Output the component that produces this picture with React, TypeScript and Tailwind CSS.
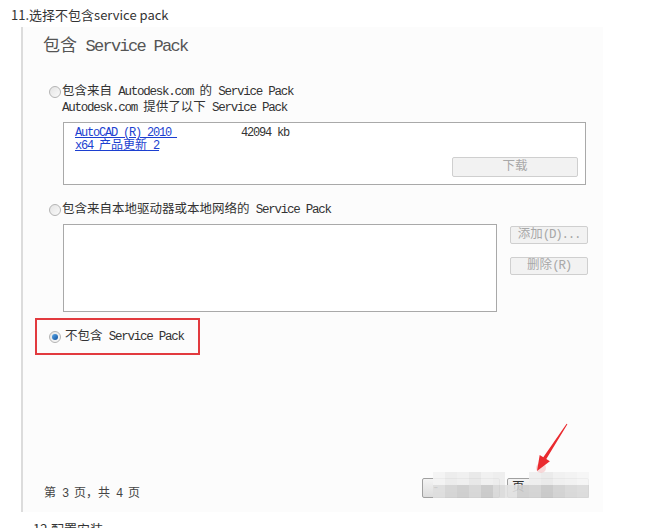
import React from "react";

// split latin runs so the mono font can be squeezed to half-width like SimSun
const Mixed = ({ text }: { text: string }) => (
  <>
    {text.split(/([\x20-\x7e]+)/).map((s, i) =>
      /[\x20-\x7e]/.test(s) ? (
        <span key={i} className="tracking-[-0.1em]">
          {s}
        </span>
      ) : (
        <React.Fragment key={i}>{s}</React.Fragment>
      )
    )}
  </>
);

const Radio = ({ checked = false }: { checked?: boolean }) => (
  <div className="w-[12px] h-[12px] rounded-full border border-[#b4b4b4] bg-gradient-to-br from-[#e4e4e4] to-[#fafafa] flex items-center justify-center shrink-0">
    {checked && (
      <div className="w-[6px] h-[6px] rounded-full bg-gradient-to-br from-[#5aa8e8] to-[#0d4f9c]" />
    )}
  </div>
);

const GrayButton = ({ label, className }: { label: string; className: string }) => (
  <div
    className={`border border-[#cfcfcf] rounded-[2px] bg-[#f2f2f2] text-[#a8a8a8] flex items-center justify-center ${className}`}
  >
    <Mixed text={label} />
  </div>
);

const mosaic = [
  ["#f3f3f3", "#ebebeb", "#eeeeee", "#e7e7e7", "#f0f0f0", "#ececec", "#f6f6f6", "#f1f1f1", "#ededed", "#e9e9e9", "#efefef", "#f2f2f2", "#f5f5f5"],
  ["#dedede", "#d4d4d4", "#cdcdcd", "#d6d6d6", "#c9c9c9", "#d9d9d9", "#e2e2e2", "#cfcfcf", "#d3d3d3", "#c8c8c8", "#d1d1d1", "#d8d8d8", "#dcdcdc"],
];

export default function App() {
  return (
    <div className="relative w-[655px] h-[528px] overflow-hidden bg-white font-['Noto_Sans_CJK_SC',sans-serif]">
      {/* caption */}
      <div className="pl-[11px] pt-[6px] h-[27px] text-[13px] leading-[18px] text-[#333]">
        11.选择不包含service pack
      </div>

      {/* installer screenshot */}
      <div className="ml-[21px] w-[582px] h-[485px] border-l-2 border-[#dcdcdc] bg-[#fcfcfc] flex flex-col text-[12.5px] leading-[16px] text-[#333] font-['Liberation_Mono','Noto_Sans_CJK_SC',monospace]">
        <div className="ml-[20px] mt-[10px] text-[17px] leading-[20px] text-[#555]">
          <Mixed text="包含 Service Pack" />
        </div>

        <div className="ml-[26px] mt-[27px] flex items-center gap-[1px]">
          <Radio />
          <span>
            <Mixed text="包含来自 Autodesk.com 的 Service Pack" />
          </span>
        </div>
        <div className="ml-[39px]">
          <Mixed text="Autodesk.com 提供了以下 Service Pack" />
        </div>

        <div className="ml-[40px] mt-[6px] w-[523px] h-[63px] border border-[#a9a9a9] bg-white flex flex-col pl-[11px] pr-[7px] pt-[4px]">
          <div className="flex text-[12px] leading-[13px]">
            <div className="w-[166px] text-[#1c3fd0] underline">
              <div className="whitespace-pre">
                <Mixed text="AutoCAD (R) 2010 " />
              </div>
              <div>
                <Mixed text="x64 产品更新 2" />
              </div>
            </div>
            <div>
              <Mixed text="42094 kb" />
            </div>
          </div>
          <div className="flex justify-end mt-[4px]">
            <GrayButton label="下载" className="w-[126px] h-[20px]" />
          </div>
        </div>

        <div className="ml-[26px] mt-[17px] flex items-center gap-[1px]">
          <Radio />
          <span>
            <Mixed text="包含来自本地驱动器或本地网络的 Service Pack" />
          </span>
        </div>

        <div className="ml-[40px] mt-[6px] flex">
          <div className="w-[434px] h-[88px] border border-[#a9a9a9] bg-white" />
          <div className="ml-[13px] mt-[2px] flex flex-col gap-[13px]">
            <GrayButton label="添加(D)..." className="w-[78px] h-[18px]" />
            <GrayButton label="删除(R)" className="w-[78px] h-[18px]" />
          </div>
        </div>

        <div className="ml-[12px] mt-[6px] w-[165px] h-[37px] border-2 border-[#e23a3e] flex items-center pl-[12px] gap-[4px]">
          <Radio checked />
          <span>
            <Mixed text="不包含 Service Pack" />
          </span>
        </div>

        <div className="flex-1" />

        {/* footer */}
        <div className="relative flex items-start h-[20px] mb-[14px]">
          <div className="ml-[21px] mt-[8px] text-[12px] text-[#444]">
            <Mixed text="第 3 页，共 4 页" />
          </div>
          <div className="flex-1" />
          <div className="flex gap-[7px] mr-[14px]">
            <div className="w-[78px] h-[20px] border border-[#a0a0a0] rounded-[2px] bg-gradient-to-b from-[#f4f4f4] to-[#dcdcdc] flex items-center pl-[9px] text-[#333]">
              -
            </div>
            <div className="w-[82px] h-[20px] border border-[#a0a0a0] rounded-[2px] bg-gradient-to-b from-[#f4f4f4] to-[#dcdcdc] flex items-center pl-[4px] text-[#333]">
              页
            </div>
          </div>

          {/* pixelated blur over the nav buttons */}
          <div className="absolute left-[410px] top-[-6px] flex flex-col">
            {mosaic.map((row, r) => (
              <div key={r} className="flex">
                {row.map((c, i) =>
                  r === 0 && (i === 6 || i === 7) ? (
                    <div key={i} className="w-[12px] h-[13px]" />
                  ) : (
                    <div key={i} className="w-[12px] h-[13px] opacity-90" style={{ backgroundColor: c }} />
                  )
                )}
              </div>
            ))}
          </div>
        </div>
      </div>

      {/* next caption, cut off by the viewport */}
      <div className="pl-[33px] pt-[8px] text-[13px] leading-[18px] text-[#333]">
        12.配置安装
      </div>

      {/* red arrow */}
      <svg className="absolute left-0 top-0 pointer-events-none" width="655" height="528">
        <circle cx="541" cy="468" r="5" fill="#f6c9cb" opacity="0.7" />
        <polygon
          points="537,471 539.7,455.1 543.3,457.3 566.6,423.7 567.4,424.3 546.3,459.1 549.9,461.3"
          fill="#ea2a2f"
        />
      </svg>
    </div>
  );
}
